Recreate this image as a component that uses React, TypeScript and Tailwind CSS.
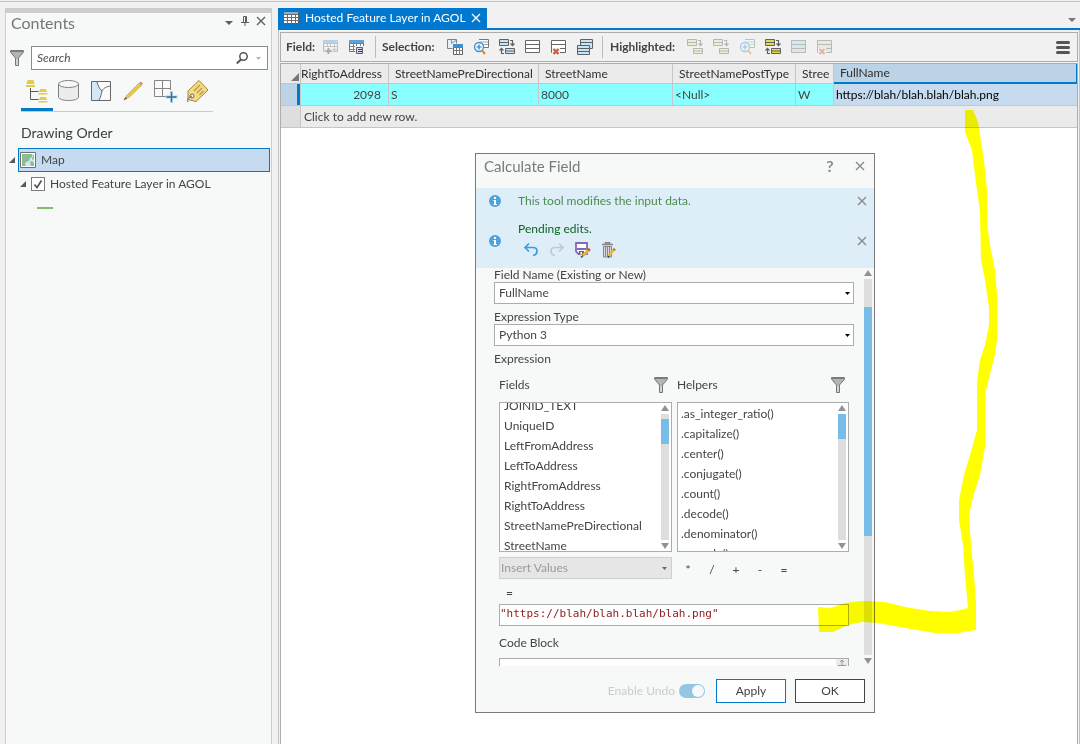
import type { ReactNode } from "react";

interface IconProps {
  faded?: boolean;
}

function Svg({ children, faded }: { children: ReactNode; faded?: boolean }) {
  return (
    <svg className={faded ? "h-4 w-4 shrink-0 opacity-40" : "h-4 w-4 shrink-0"} viewBox="0 0 16 16" fill="none" aria-hidden>
      {children}
    </svg>
  );
}

function TabTableIcon() {
  return (
    <svg className="h-4 w-4 shrink-0" viewBox="0 0 16 16" fill="none" aria-hidden>
      <path d="M.5 1.5h15v12H.5z" fill="#fff" stroke="#5a5a5a" />
      <path d="M1 2h14v2H1z" fill="#7fb2dc" />
      <path d="M0 4.5h16M0 7.5h16M0 10.5h16M4.5 4v10M8.5 4v10M12.5 4v10" stroke="#6a6a6a" />
    </svg>
  );
}

function FieldGridIcon({ faded, add }: IconProps & { add?: boolean }) {
  return (
    <Svg faded={faded}>
      <path d="M.5 1.5h14v11H.5z" fill="#fff" stroke="#707070" />
      <path d="M0 1h15v3H0z" fill="#5ba3d6" />
      <path d="M0 4.5h15M0 7.5h15M0 10.5h15M4.5 4v9M7.5 4v9M11.5 4v9" stroke="#808080" />
      {add ? (
        <>
          <path d="M2 8h7v8H2z" fill="#f1f1f1" />
          <path d="M5.5 9v6M2.5 12h6" stroke="#444" strokeWidth="2" />
        </>
      ) : (
        <>
          <path d="M6 7h9v9H6z" fill="#f1f1f1" />
          <path d="M7.500 8.500h6v6h-6z" fill="#d9d3ea" stroke="#606060" />
          <path d="M9 10.500h4M9 12.500h4" stroke="#444" />
        </>
      )}
    </Svg>
  );
}

function SelectByAttributesIcon() {
  return (
    <Svg>
      <path d="M.5.5h9v4H5v5H.5z" fill="#e4f2fb" />
      <path d="M5.500 9.500h-5V.5h9v4" stroke="#808080" />
      <path d="M4.500 1v3.500L9 1.500" stroke="#6b9dbd" />
      <path d="M6.500 5.500h9v10h-9z" fill="#fff" stroke="#606060" />
      <path d="M6 5h10v3H6z" fill="#3f92cc" />
      <path d="M6 8.500h10M6 11.500h10M9.500 8v8M12.500 8v8" stroke="#777" />
    </Svg>
  );
}

function ZoomSelectionIcon({ faded }: IconProps) {
  return (
    <Svg faded={faded}>
      <path d="M6 .5h9.500v8H11" fill="#fff" stroke="#777" />
      <path d="M7 3h8M8 5.500h7" stroke="#8ab" />
      <circle cx="6" cy="8" r="4.500" fill="#eef7fd" stroke="#3f92cc" strokeWidth="1.300" />
      <path d="M6 5.500v5M3.500 8h5" stroke="#3f7cac" strokeWidth="1.200" />
      <path d="M9 11.500l3 3.500" stroke="#d18a3f" strokeWidth="2" />
    </Svg>
  );
}

function SwitchIcon({ faded, fill, back = true }: IconProps & { fill: string; back?: boolean }) {
  return (
    <Svg faded={faded}>
      <path d="M.5.5h9v6h-9z" fill={fill} stroke="#606060" />
      <path d="M1 3.500h8" stroke="#606060" />
      <path d="M6.500 9.500h9v5h-9z" fill={fill} stroke="#606060" />
      <path d="M7 12h8" stroke="#606060" />
      <path d="M11 1.500h2.500V6M11.500 4.500l2 2.200 2-2.200" stroke="#606060" strokeWidth="1.200" />
      {back && <path d="M5 14.500H2.500V9.500M.5 11.500l2-2.200 2 2.200" stroke="#606060" strokeWidth="1.200" />}
    </Svg>
  );
}

function RowsIcon({ faded, fill = "#fff" }: IconProps & { fill?: string }) {
  return (
    <Svg faded={faded}>
      <path d="M.5 1.500h14v12H.5z" fill={fill} stroke="#666" />
      <path d="M0 5.500h15M0 9.500h15" stroke="#666" />
    </Svg>
  );
}

function ClearRowsIcon({ faded, fill = "#fff" }: IconProps & { fill?: string }) {
  return (
    <Svg faded={faded}>
      <path d="M.5 1.500h14v12H.5z" fill={fill} stroke="#666" />
      <path d="M0 5.500h15M0 9.500h15" stroke="#666" />
      <path d="M1 9h8v7H1z" fill="#f1f1f1" />
      <path d="M2.500 10l5 5M7.500 10l-5 5" stroke="#cf5a3a" strokeWidth="2.200" />
    </Svg>
  );
}

function CopyRowsIcon() {
  return (
    <Svg>
      <path d="M3.500.5h12v9h-12z" fill="#c6e5f5" stroke="#606060" />
      <path d="M3 3.500h13" stroke="#606060" />
      <path d="M.5 6.500h12v9H.5z" fill="#c6e5f5" stroke="#606060" />
      <path d="M0 9.500h13M0 12.500h13" stroke="#606060" />
    </Svg>
  );
}

function FunnelIcon() {
  return (
    <svg className="h-4 w-3.5 shrink-0" viewBox="0 0 14 16" aria-hidden>
      <path d="M.6.6h12.800v1.600L8.500 8v7.500h-3V8L.6 2.200z" fill="#b4b4b4" stroke="#777" />
      <path d="M.6 1.200h12.800" stroke="#777" strokeWidth="1.400" />
      <path d="M7 9v6" stroke="#f2f2f2" />
    </svg>
  );
}

function CloseIcon() {
  return (
    <svg className="h-2.5 w-2.5" viewBox="0 0 10 10" aria-hidden>
      <path d="M1 1l8 8M9 1L1 9" stroke="currentColor" strokeWidth="1.400" />
    </svg>
  );
}

function Triangle({ up }: { up?: boolean }) {
  return (
    <svg className="h-1.5 w-2 shrink-0" viewBox="0 0 8 6" fill="currentColor" aria-hidden>
      <path d={up ? "M0 6h8L4 0z" : "M0 0h8L4 6z"} />
    </svg>
  );
}

function Expander() {
  return (
    <svg className="h-1.5 w-1.5 shrink-0 text-[#595959]" viewBox="0 0 6 6" fill="currentColor" aria-hidden>
      <path d="M6 0v6H0z" />
    </svg>
  );
}

function InfoIcon() {
  return (
    <svg className="h-3 w-3 shrink-0" viewBox="0 0 12 12" aria-hidden>
      <circle cx="6" cy="6" r="6" fill="#4ea5dc" />
      <path d="M5 2h2v2H5zM4.500 5H7v4h1v1H4.500V9H5V6h-.5z" fill="#fff" />
    </svg>
  );
}

const contentTabs = [
  {
    label: "List by drawing order",
    icon: (
      <>
        <path d="M3.500 2h6l1 4h-8zM2 7h9v2H2zM16 11h6l1 3h-8zM14.500 15h9v1.500h-9zM16 19h6l1 3h-8zM14.500 23h9v1.500h-9z" fill="#e3cb47" />
        <path d="M6.500 10v11.500h8M6.500 13.500h8" stroke="#5a5a5a" />
      </>
    ),
  },
  {
    label: "List by data source",
    icon: (
      <>
        <path d="M2.500 6v13c0 2 4.500 3.500 10 3.500s10-1.500 10-3.500V6" fill="#ececec" stroke="#808080" />
        <ellipse cx="12.500" cy="6" rx="10" ry="3.500" fill="#f7f7f7" stroke="#808080" />
      </>
    ),
  },
  {
    label: "List by selection",
    icon: (
      <>
        <path d="M3.500 3.500h19v19h-19z" fill="#fafafa" />
        <path d="M4 4h5l4.500 9-2.500 9H4z" fill="#d3e9f8" />
        <path d="M9 4c1 4 2 6 5 9-1 3-1 6-3 9M22 8c-5 1-7 3-8 5" stroke="#666" />
        <path d="M3.500 3.500h19v19h-19z" stroke="#666" />
      </>
    ),
  },
  {
    label: "List by editing",
    icon: (
      <>
        <path d="M4.500 21.500l2-4L19 5l2.500 2.500L9 19.500z" fill="#e6c94c" stroke="#c4a437" strokeWidth=".6" />
        <path d="M19 5l2.500 2.500 1.500-2L21 3.500z" fill="#d98880" />
        <path d="M3.500 22.500l2-3.500 1.500 1.500z" fill="#555" />
      </>
    ),
  },
  {
    label: "List by snapping",
    icon: (
      <>
        <path d="M2.500 2.500h16v16h-16zM10.500 2v17M2 10.500h17" fill="#fafafa" stroke="#858585" />
        <path d="M14 12h12v12H14z" fill="#f7f9f8" />
        <path d="M19.500 13v12M13.500 19h12" stroke="#a8d8f5" strokeWidth="3" />
        <path d="M19.500 14v10M14.500 19h10" stroke="#4a6a80" strokeWidth="1.300" />
      </>
    ),
  },
  {
    label: "List by labeling",
    icon: (
      <>
        <path d="M4 13L15 2.500l9 9.500-12 11.500-8-2z" fill="#f3da85" stroke="#a8842f" />
        <path d="M10 13l6-6M13 15l5-5M15.500 17l4-4" stroke="#b9964a" strokeWidth="1.200" />
        <circle cx="8" cy="18" r="2" fill="#fff" stroke="#666" />
        <path d="M8 18c-4 2-5 3-4 6" stroke="#666" />
      </>
    ),
  },
];

function ContentsPane() {
  return (
    <aside className="flex w-[267px] shrink-0 flex-col border-x border-t-[5px] border-[#cdcdcd] bg-[#f7f9f8]">
      <header className="flex h-[33px] items-start pl-[5px] text-[#5f5f5f]">
        <h2 className="grow text-base leading-5 text-[#757575]">Contents</h2>
        <button className="mt-2 flex w-4 justify-center" aria-label="Pane options">
          <svg className="h-1 w-2" viewBox="0 0 8 4" fill="currentColor" aria-hidden>
            <path d="M0 0h8L4 4z" />
          </svg>
        </button>
        <button className="mt-[3px] flex w-4 justify-center" aria-label="Auto hide">
          <svg className="h-2.5 w-2" viewBox="0 0 8 10" fill="none" stroke="currentColor" aria-hidden>
            <path d="M2.500 6V.5h3V6M0 6.500h8M4.500.5v6M4 7v3" />
          </svg>
        </button>
        <button className="mt-[3px] mr-0.5 flex w-4 justify-center" aria-label="Close Contents">
          <CloseIcon />
        </button>
      </header>

      <div className="flex items-center gap-[7px] pr-[3px] pl-1">
        <FunnelIcon />
        <div className="flex h-6 grow items-center border border-[#8c8c8c] bg-white pr-1.5">
          <input
            aria-label="Search"
            placeholder="Search"
            className="min-w-0 grow bg-transparent px-[5px] italic outline-none placeholder:text-[#505050]"
          />
          <svg className="h-3 w-3" viewBox="0 0 12 12" fill="none" stroke="#555" aria-hidden>
            <circle cx="7.500" cy="4.500" r="3.700" strokeWidth="1.500" />
            <path d="M5 7.500L.8 11.500" strokeWidth="2" />
          </svg>
          <svg className="ml-2 h-[3px] w-[5px]" viewBox="0 0 5 3" fill="#b5b5b5" aria-hidden>
            <path d="M0 0h5L2.500 3z" />
          </svg>
        </div>
      </div>

      <nav className="mt-2 ml-[15px] flex w-48 border-b border-[#c9c9c9]">
        {contentTabs.map((tab, i) => (
          <button
            key={tab.label}
            aria-label={tab.label}
            className={
              i === 0
                ? "flex h-[33px] w-8 justify-center border-b-[3px] border-[#007ac9]"
                : "flex h-[33px] w-8 justify-center"
            }
          >
            <svg className="h-[26px] w-[26px] shrink-0" viewBox="0 0 26 26" fill="none" aria-hidden>
              {tab.icon}
            </svg>
          </button>
        ))}
      </nav>

      <h3 className="mt-[11px] pl-[15px] text-sm leading-5 text-[#3c3c3c]">Drawing Order</h3>

      <div className="mt-[5px] flex items-center gap-[3px] pr-px pl-[3px]">
        <Expander />
        <div className="flex h-6 grow items-center gap-[5px] border border-[#007ac9] bg-[#c6dbef] pl-px">
          <svg className="h-4 w-4" viewBox="0 0 16 16" aria-hidden>
            <path d="M.5.5h15v15H.5z" fill="#fff" stroke="#707070" />
            <path d="M2 2h12v12H2z" fill="#cfe8f7" />
            <path d="M2 2h10v3l-2 1-1 3-3 1-1 2 1 2H2zM13 3h1v4l-2 1zM10 10l2-1 2 2v3h-3z" fill="#8dbb92" />
          </svg>
          <span>Map</span>
        </div>
      </div>

      <div className="flex h-6 items-center gap-[5px] pl-[14px]">
        <Expander />
        <label className="flex items-center gap-[5px]">
          <span className="grid">
            <input
              type="checkbox"
              defaultChecked
              className="peer col-start-1 row-start-1 h-3.5 w-3.5 appearance-none border border-[#7c7c7c] bg-white"
            />
            <svg className="pointer-events-none col-start-1 row-start-1 hidden h-3.5 w-3.5 peer-checked:block" viewBox="0 0 14 14" fill="none" aria-hidden>
              <path d="M3.500 7.500L6 10.500l4.500-7" stroke="#555" strokeWidth="1.700" />
            </svg>
          </span>
          Hosted Feature Layer in AGOL
        </label>
      </div>
      <div className="mt-[11px] ml-[31px] h-0.5 w-4 bg-[#86b96a]" />
    </aside>
  );
}

function ToolButton({ label, children }: { label: string; children: ReactNode }) {
  return (
    <button className="flex w-[26px] justify-center" aria-label={label}>
      {children}
    </button>
  );
}

function TableToolbar() {
  return (
    <div className="flex h-[30px] items-center border border-[#adadad] bg-[#f1f1f1] pr-[7px] pl-[5px]">
      <span className="w-8 font-bold whitespace-nowrap text-[#444]">Field:</span>
      <ToolButton label="Add field"><FieldGridIcon add faded /></ToolButton>
      <ToolButton label="Calculate field"><FieldGridIcon /></ToolButton>
      <span className="mr-1.5 ml-[5px] h-[22px] w-px bg-[#bcbcbc]" />
      <span className="w-[60px] font-bold whitespace-nowrap text-[#444]">Selection:</span>
      <ToolButton label="Select by attributes"><SelectByAttributesIcon /></ToolButton>
      <ToolButton label="Zoom to selection"><ZoomSelectionIcon /></ToolButton>
      <ToolButton label="Switch selection"><SwitchIcon fill="#c6e5f5" /></ToolButton>
      <ToolButton label="Select all"><RowsIcon /></ToolButton>
      <ToolButton label="Clear selection"><ClearRowsIcon /></ToolButton>
      <ToolButton label="Copy rows"><CopyRowsIcon /></ToolButton>
      <span className="mr-[7px] ml-1 h-[22px] w-px bg-[#bcbcbc]" />
      <span className="w-[72px] font-bold whitespace-nowrap text-[#444]">Highlighted:</span>
      <ToolButton label="Unselect highlighted"><SwitchIcon fill="#f3eb9b" back={false} faded /></ToolButton>
      <ToolButton label="Reselect highlighted"><SwitchIcon fill="#f3eb9b" back={false} faded /></ToolButton>
      <ToolButton label="Zoom to highlighted"><ZoomSelectionIcon faded /></ToolButton>
      <ToolButton label="Switch highlighted"><SwitchIcon fill="#ead94f" /></ToolButton>
      <ToolButton label="Highlight all"><RowsIcon fill="#b5dcf0" faded /></ToolButton>
      <ToolButton label="Clear highlighted"><ClearRowsIcon fill="#d5e6c5" faded /></ToolButton>
      <button className="ml-auto flex flex-col gap-0.5" aria-label="Table menu">
        <span className="h-[3px] w-3.5 rounded-sm bg-[#555]" />
        <span className="h-[3px] w-3.5 rounded-sm bg-[#555]" />
        <span className="h-[3px] w-3.5 rounded-sm bg-[#555]" />
      </button>
    </div>
  );
}

const columns = [
  { name: "StreetNamePreDirectional", value: "S" },
  { name: "StreetName", value: "8000" },
  { name: "StreetNamePostType", value: "<Null>" },
  { name: "Stree", value: "W" },
];

function AttributeTable() {
  return (
    <table className="w-full table-fixed border-separate border-spacing-0 text-left whitespace-nowrap">
      <colgroup>
        <col className="w-5" />
        <col className="w-[88px]" />
        <col className="w-[150px]" />
        <col className="w-[134px]" />
        <col className="w-[123px]" />
        <col className="w-[38px]" />
        <col />
      </colgroup>
      <thead className="text-[#2f2f2f]">
        <tr className="h-5 bg-[#ebebeb]">
          <th className="border-r border-b border-[#c6c6c6] p-0" aria-label="Select all rows">
            <svg className="mt-1.5 ml-auto h-2.5 w-2.5" viewBox="0 0 10 10" aria-hidden>
              <path d="M9 1v8H1z" fill="#777" />
            </svg>
          </th>
          <th className="border-r border-b border-[#c6c6c6] py-0 pr-[7px] pl-0 text-right font-normal">RightToAddress</th>
          {columns.map((column) => (
            <th key={column.name} className="border-r border-b border-[#c6c6c6] py-0 pr-0 pl-1.5 font-normal">
              {column.name}
            </th>
          ))}
          <th className="border-r border-b-2 border-[#007ac9] bg-[#bcd2e6] py-0 pl-1.5 font-normal">FullName</th>
        </tr>
      </thead>
      <tbody>
        <tr className="h-[22px] bg-[#8affff] text-[#444]">
          <td className="border-r border-b border-[#c6c6c6] bg-[#bcd2e6] p-0">
            <div className="ml-auto h-[21px] w-[3px] bg-[#007ac9]" />
          </td>
          <td className="border-r border-b border-[#c6c6c6] py-0 pr-[7px] text-right">2098</td>
          {columns.map((column) => (
            <td key={column.name} className="border-r border-b border-[#c6c6c6] py-0 pl-0.5">
              {column.value}
            </td>
          ))}
          <td className="border-b border-[#c6c6c6] bg-[#c6dbef] py-0 pl-0.5 text-black">https://blah/blah.blah/blah.png</td>
        </tr>
        <tr className="h-[22px] bg-[#ebebeb] text-[#444]">
          <td className="border-r border-b border-[#c6c6c6] bg-[#dedede]" />
          <td colSpan={6} className="border-b border-[#c6c6c6] py-0 pl-[3px]">Click to add new row.</td>
        </tr>
      </tbody>
    </table>
  );
}

function TableView() {
  return (
    <main className="flex min-w-0 grow flex-col">
      <div className="flex h-[22px] items-end border-b-2 border-[#0078cf]">
        <div className="flex h-5 items-center bg-[#0078cf] pl-[5px] text-white">
          <TabTableIcon />
          <span className="ml-1.5 w-[161px] whitespace-nowrap">Hosted Feature Layer in AGOL</span>
          <button className="pr-1.5 pl-[5px]" aria-label="Close tab">
            <CloseIcon />
          </button>
        </div>
        <button className="mr-1 mb-1.5 ml-auto text-[#777]" aria-label="Open tabs">
          <svg className="h-1 w-2" viewBox="0 0 8 4" fill="currentColor" aria-hidden>
            <path d="M0 0h8L4 4z" />
          </svg>
        </button>
      </div>
      <div className="flex grow flex-col border-x border-[#c4c4c4] pt-0.5 pr-px pl-px">
        <TableToolbar />
        <div className="mt-px grow border border-b-0 border-[#adadad] bg-white">
          <AttributeTable />
        </div>
      </div>
    </main>
  );
}

function DialogSelect({ id, label, options }: { id: string; label: string; options: string[] }) {
  return (
    <>
      <label htmlFor={id} className="leading-[14px]">{label}</label>
      <div className="mb-1.5 grid items-center">
        <select
          id={id}
          className="col-start-1 row-start-1 h-[22px] appearance-none border border-[#acacac] bg-white pl-1 text-[#444]"
        >
          {options.map((option) => (
            <option key={option}>{option}</option>
          ))}
        </select>
        <svg className="pointer-events-none col-start-1 row-start-1 mr-1 h-[3px] w-[5px] justify-self-end" viewBox="0 0 5 3" aria-hidden>
          <path d="M0 0h5L2.500 3z" fill="#000" />
        </svg>
      </div>
    </>
  );
}

const fields = [
  "JOINID_TEXT",
  "UniqueID",
  "LeftFromAddress",
  "LeftToAddress",
  "RightFromAddress",
  "RightToAddress",
  "StreetNamePreDirectional",
  "StreetName",
];

const helpers = [
  ".as_integer_ratio()",
  ".capitalize()",
  ".center()",
  ".conjugate()",
  ".count()",
  ".decode()",
  ".denominator()",
  ".encode()",
];

interface PickListProps {
  title: string;
  items: string[];
  scrolled?: boolean;
}

function PickList({ title, items, scrolled }: PickListProps) {
  return (
    <section className="min-w-0">
      <header className="flex h-5 items-center justify-between pr-1">
        <h4>{title}</h4>
        <FunnelIcon />
      </header>
      <div className="mt-[7px] flex h-[150px] overflow-hidden border border-[#acacac] bg-white">
        <ul className={scrolled ? "-mt-[7px] grow pl-1" : "mt-px grow pl-[3px]"}>
          {items.map((item) => (
            <li key={item} className="h-5 leading-5 whitespace-nowrap">{item}</li>
          ))}
        </ul>
        <div className="mr-0.5 flex w-2 flex-col gap-[3px] py-0.5 text-[#929292]">
          <Triangle up />
          <div className={scrolled ? "grow bg-[#dedede] pt-[5px]" : "grow bg-[#dedede]"}>
            <div className="h-[25px] bg-[#78bce8]" />
          </div>
          <Triangle />
        </div>
      </div>
    </section>
  );
}

function UndoIcon() {
  return (
    <Svg>
      <path d="M6 1.500L2 5.500l4 4M2 5.500H10c2.500 0 4 1.300 4 3.500s-1.500 4-4 4.500" stroke="#3f9bdc" strokeWidth="1.700" />
    </Svg>
  );
}

function RedoIcon() {
  return (
    <Svg>
      <path d="M10 1.500l4 4-4 4M14 5.500H6C3.500 5.500 2 6.800 2 9s1.500 4 4 4.500" stroke="#c3c9cd" strokeWidth="1.700" />
    </Svg>
  );
}

function SaveEditsIcon() {
  return (
    <Svg>
      <path d="M1 1h11v11H3.500L1 9.500z" fill="#fff" stroke="#8a67b5" strokeWidth="1.800" />
      <path d="M2 6h9v2H2z" fill="#8a67b5" />
      <path d="M4 9h5v4H4z" fill="#6a6a6a" />
      <path d="M5.500 10h1.500v2.500H5.500z" fill="#fff" />
      <path d="M8 13.500l5.500-5.500" stroke="#e0b93d" strokeWidth="3" />
      <path d="M13 8.500L14.800 6.800" stroke="#cf5a3a" strokeWidth="3" />
      <path d="M6 15.500l2-2" stroke="#444" strokeWidth="1.500" />
    </Svg>
  );
}

function DiscardEditsIcon() {
  return (
    <Svg>
      <path d="M1 2.500h11M4.500 2V.8h4V2" stroke="#858585" strokeWidth="1.500" />
      <path d="M2.500 4.500h8V15h-8z" fill="#dcdcdc" stroke="#858585" />
      <path d="M4.500 5v9.500M6.500 5v9.500M8.500 5v9.500" stroke="#858585" />
      <path d="M8 13.500l5-6" stroke="#e0b93d" strokeWidth="2.600" />
      <path d="M12.800 8l1-1.300" stroke="#cf5a3a" strokeWidth="2.600" />
      <path d="M7 15.500l1-1.500" stroke="#444" strokeWidth="1.500" />
    </Svg>
  );
}

function CalculateFieldDialog() {
  return (
    <div
      role="dialog"
      aria-label="Calculate Field"
      className="absolute top-[153px] left-[475px] flex w-[400px] flex-col border border-[#7a7a7a] bg-[#f7f9f8]"
    >
      <header className="flex h-[34px] items-center pr-1.5 pb-2.5 pl-2 text-[#8a8a8a]">
        <h2 className="grow text-[15px] text-[#7a7a7a]">Calculate Field</h2>
        <button className="w-5 text-base font-bold" aria-label="Help">?</button>
        <button className="ml-3 flex w-4 justify-center" aria-label="Close dialog">
          <CloseIcon />
        </button>
      </header>

      <div className="flex h-20 flex-col bg-[#deeef9] pr-[7px] pl-[13px] text-[#8a8a8a]">
        <div className="flex h-[26px] items-center">
          <InfoIcon />
          <p className="ml-[17px] grow text-[#4c8c50]">This tool modifies the input data.</p>
          <button aria-label="Dismiss message">
            <CloseIcon />
          </button>
        </div>
        <div className="flex h-[54px] items-center">
          <InfoIcon />
          <div className="ml-[17px] grow pb-1">
            <p className="text-[#0d6420]">Pending edits.</p>
            <div className="mt-[5px] ml-[5px] flex gap-2.5">
              <button aria-label="Undo"><UndoIcon /></button>
              <button aria-label="Redo"><RedoIcon /></button>
              <button aria-label="Save edits"><SaveEditsIcon /></button>
              <button aria-label="Discard edits"><DiscardEditsIcon /></button>
            </div>
          </div>
          <button aria-label="Dismiss pending edits">
            <CloseIcon />
          </button>
        </div>
      </div>

      <div className="flex h-[398px] overflow-hidden pr-0.5 pl-[18px]">
        <form className="flex w-[360px] flex-col">
          <DialogSelect id="field-name" label="Field Name (Existing or New)" options={["FullName"]} />
          <DialogSelect id="expression-type" label="Expression Type" options={["Python 3"]} />
          <h3 className="leading-[14px]">Expression</h3>

          <div className="mt-[9px] px-[5px]">
            <div className="grid grid-cols-[173px_172px] gap-[5px]">
              <PickList title="Fields" items={fields} scrolled />
              <PickList title="Helpers" items={helpers} />
            </div>
            <div className="mt-[5px] flex items-center">
              <div className="grid w-[173px] items-center">
                <select
                  aria-label="Insert Values"
                  disabled
                  className="col-start-1 row-start-1 h-[22px] appearance-none border border-[#cfcfcf] bg-[#e6e6e6] pl-px text-[#9a9a9a] opacity-100"
                >
                  <option>Insert Values</option>
                </select>
                <svg className="pointer-events-none col-start-1 row-start-1 mr-[5px] h-[3px] w-[5px] justify-self-end" viewBox="0 0 5 3" aria-hidden>
                  <path d="M0 0h5L2.500 3z" fill="#666" />
                </svg>
              </div>
              <div className="ml-1 flex pt-1">
                {["*", "/", "+", "-", "="].map((op) => (
                  <button key={op} type="button" className="w-6">{op}</button>
                ))}
              </div>
            </div>
            <label htmlFor="expression" className="mt-[7px] block pl-[7px] leading-[14px]">=</label>
            <input
              id="expression"
              defaultValue={'"https://blah/blah.blah/blah.png"'}
              className="mt-1 block h-[22px] w-full border border-[#acacac] bg-white pb-[3px] font-['DejaVu_Sans_Mono',monospace] text-[11px] text-[#8b1a1a] outline-none"
            />
            <label htmlFor="code-block" className="mt-2.5 block leading-[14px]">Code Block</label>
            <div className="mt-2 flex border border-[#acacac] bg-white">
              <textarea id="code-block" className="h-10 grow resize-none outline-none" />
              <div className="flex w-3 justify-center bg-[#ececec] text-[#999]">
                <svg className="h-2 w-2" viewBox="0 0 8 8" fill="none" stroke="currentColor" aria-hidden>
                  <path d="M4 1v5M2 3l2-2 2 2M0 6.500h8" />
                </svg>
              </div>
            </div>
          </div>
        </form>
        <div className="ml-auto flex w-2 flex-col gap-[3px] py-0.5 text-[#929292]">
          <Triangle up />
          <div className="grow bg-[#dedede] pt-7">
            <div className="h-[229px] bg-[#78bce8]" />
          </div>
          <Triangle />
        </div>
      </div>

      <footer className="flex h-[46px] items-center justify-end gap-[9px] pt-1 pr-[9px]">
        <label className="flex items-center gap-1 text-[#c9cccb]">
          Enable Undo
          <span className="mr-0.5 grid items-center">
            <input
              type="checkbox"
              role="switch"
              defaultChecked
              disabled
              className="col-start-1 row-start-1 h-3.5 w-[26px] appearance-none rounded-full bg-[#94c6e4]"
            />
            <span className="col-start-1 row-start-1 mr-px h-3 w-3 justify-self-end rounded-full bg-[#f7f9f8]" />
          </span>
        </label>
        <button className="h-6 w-[70px] border border-[#0078cf] bg-white">Apply</button>
        <button className="h-6 w-[70px] border border-[#444] bg-white">OK</button>
      </footer>
    </div>
  );
}

// Marker stroke linking the FullName cell to the expression box
function MarkerStroke() {
  return (
    <svg
      className="pointer-events-none absolute top-[110px] left-[818px] h-[524px] w-[180px] mix-blend-multiply"
      viewBox="818 110 180 524"
      aria-hidden
    >
      <path
        d="M965 110L973 110L978 122L980 135L984 160L987 190L987 225L990 245L995 270L997 294L997 340L995 355L989 378L986 390L985 400L985 447L980 475L973 497L969 515L971 545L974 575L976 604L976 630L958 633L935 633L905 628L878 623L862 622L848 625L833 632L819 632L818 607L830 608L845 603L862 601L885 602L905 607L930 611L950 612L960 610L968 608L965 575L963 545L959 520L959 500L964 475L970 455L977 430L977 382L980 360L985 345L989 325L989 308L985 280L981 260L980 212L975 175L972 150L965 132Z"
        fill="#ff0"
      />
    </svg>
  );
}

export default function App() {
  return (
    <div className="relative flex min-h-screen flex-col overflow-hidden bg-[#f1f1f1] pt-px font-['Lato','Open_Sans',sans-serif] text-[12px] leading-4 text-[#444]">
      <div className="h-px bg-[#c3c3c3]" />
      <div className="flex grow gap-1.5 pt-1.5 pl-[5px]">
        <ContentsPane />
        <TableView />
      </div>
      <CalculateFieldDialog />
      <MarkerStroke />
    </div>
  );
}
